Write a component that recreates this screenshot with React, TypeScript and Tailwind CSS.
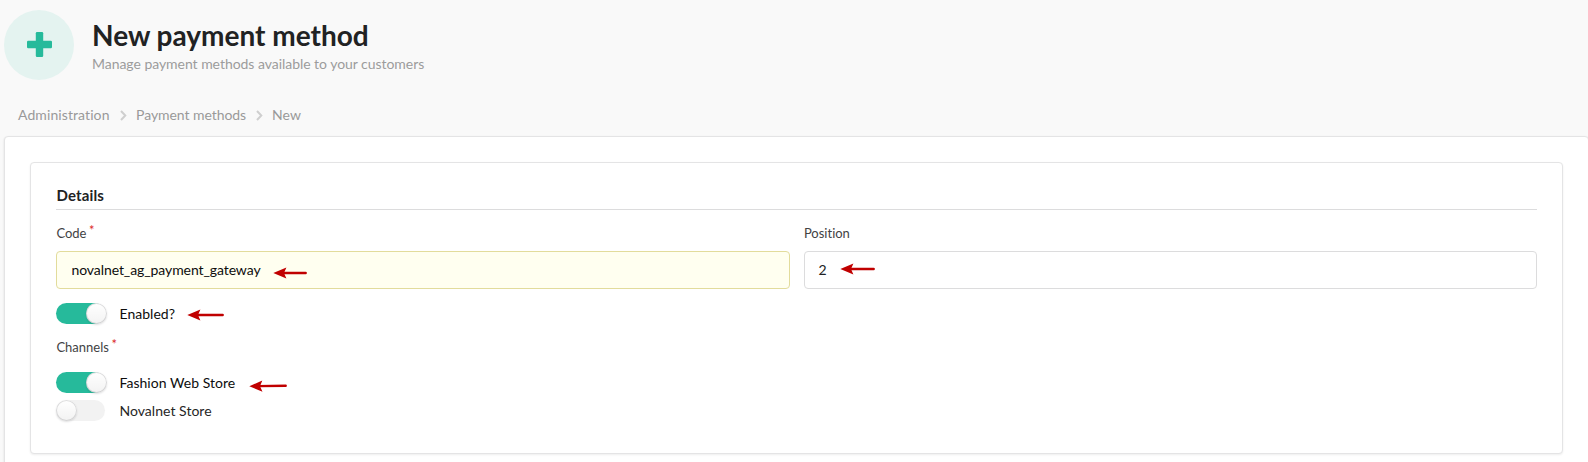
import React from 'react';

function Arrow({ className, width }: { className: string; width: number }) {
  return (
    <svg
      className={`pointer-events-none absolute h-[12px] ${className}`}
      width={width}
      height={12}
      viewBox={`0 0 ${width} 12`}
      aria-hidden="true"
    >
      <path d="M0.3 6 L13.4 0.4 L11 6 L13.4 11.6 Z" fill="#c00000" />
      <line x1="9" y1="6" x2={width - 1.3} y2="6" stroke="#c00000" strokeWidth="2.4" strokeLinecap="round" />
    </svg>
  );
}

function Chevron() {
  return (
    <svg className="mt-[2px] h-[11px] w-[7px]" viewBox="0 0 7 11" fill="none" aria-hidden="true">
      <path d="M1 1 L5.3 5.5 L1 10" stroke="#cfcfcf" strokeWidth="2" />
    </svg>
  );
}

function Toggle({ label, on, children }: { label: string; on?: boolean; children?: React.ReactNode }) {
  return (
    <div className="relative flex h-[21px] items-center">
      <div className={`flex h-[21px] w-[49px] shrink-0 rounded-full ${on ? 'bg-[#26ba9b]' : 'bg-[#f2f2f2]'}`}>
        <span
          className={`h-[21px] w-[21px] shrink-0 rounded-full bg-white bg-linear-to-b from-transparent to-black/5 shadow-[0_1px_2px_0_rgba(34,36,38,0.15),inset_0_0_0_1px_rgba(34,36,38,0.15)] ${on ? 'ml-[30px]' : ''}`}
        />
      </div>
      <span className={`ml-[14.5px] pt-px text-[14px] leading-[20px] tracking-[0.03px] ${on ? 'text-[#0d0d0d]' : 'text-[#262626]'}`}>{label}</span>
      {children}
    </div>
  );
}

function Label({ text, required }: { text: string; required?: boolean }) {
  return (
    <div className="flex h-[17px] items-start pl-[0.4px] text-[13px] leading-[17px] text-[#424243]">
      <span>{text}</span>
      {required && <span className="-mt-[3px] ml-[2.6px] text-[13px] text-[#db2828]">*</span>}
    </div>
  );
}

export default function App() {
  return (
    <div className="h-[462px] overflow-hidden bg-[#f9f9f9] font-['Lato',sans-serif] text-[#212223] [font-variant-ligatures:none]">
      <header className="flex h-[90px] items-start pt-[10px] pl-[4px]">
        <div className="flex h-[70px] w-[70px] items-center justify-center rounded-full bg-[#e4f3f0] pb-px">
          <svg className="h-[25px] w-[25px]" viewBox="0 0 25 25" aria-hidden="true">
            <rect x="8.8" y="0" width="7.4" height="25" rx="1.2" fill="#26ba9b" />
            <rect x="0" y="8.8" width="25" height="7.4" rx="1.2" fill="#26ba9b" />
          </svg>
        </div>
        <div className="ml-[18px] pt-[7px]">
          <h1 className="text-[28px] leading-[36px] font-bold">New payment method</h1>
          <p className="mt-px text-[14px] leading-[20px] tracking-[-0.04px] text-[#9c9c9c]">Manage payment methods available to your customers</p>
        </div>
      </header>

      <nav className="flex h-[46px] items-center gap-[10px] pt-[3px] pl-[18px] text-[14px] leading-[20px] text-[#999999]">
        <span className="tracking-[0.09px]">Administration</span>
        <Chevron />
        <span className="ml-[-0.5px] tracking-[-0.06px]">Payment methods</span>
        <Chevron />
        <span className="ml-[-1px]">New</span>
      </nav>

      <main className="mr-[-1px] ml-[4px] h-[360px] rounded-t-[4px] border border-[#e4e4e5] bg-white px-[25px] pt-[25px] shadow-[0_1px_2px_0_rgba(34,36,38,0.15)]">
        <section className="h-[292px] w-[1533px] rounded-[4px] border border-[#e4e4e5] bg-white px-[25px] pt-[22px] shadow-[0_1px_2px_0_rgba(34,36,38,0.08)]">
          <h2 className="h-[25px] border-b border-[#dcdcdd] pl-[0.5px] text-[15px] leading-[21px] font-bold tracking-[0.15px]">Details</h2>

          <div className="mt-[15px] grid grid-cols-2 gap-[14px]">
            <div>
              <Label text="Code" required />
              <div className="relative mt-[9px] flex h-[38px] items-center rounded-[4px] border border-[#e2dc9c] bg-[#fffff0] px-[14.5px] pb-[2px] text-[14px] tracking-[-0.09px] text-[#0d0d0d]">
                novalnet_ag_payment_gateway
                <Arrow className="top-[15px] left-[216px]" width={34} />
              </div>
            </div>
            <div>
              <Label text="Position" />
              <div className="relative mt-[9px] flex h-[38px] items-center rounded-[4px] border border-[#dcdcdd] bg-white px-[14px] pb-[2px] text-[14px] text-[#212223]">
                2
                <Arrow className="top-[11px] left-[35px]" width={35} />
              </div>
            </div>
          </div>

          <div className="mt-[14px]">
            <Toggle label="Enabled?" on>
              <Arrow className="top-[6px] left-[131px]" width={37} />
            </Toggle>
          </div>
          <div className="mt-[15px]">
            <Label text="Channels" required />
          </div>
          <div className="mt-[16px] flex flex-col gap-[7px]">
            <Toggle label="Fashion Web Store" on>
              <Arrow className="top-[8px] left-[193px] -rotate-1" width={38} />
            </Toggle>
            <Toggle label="Novalnet Store" />
          </div>
        </section>
      </main>
    </div>
  );
}
